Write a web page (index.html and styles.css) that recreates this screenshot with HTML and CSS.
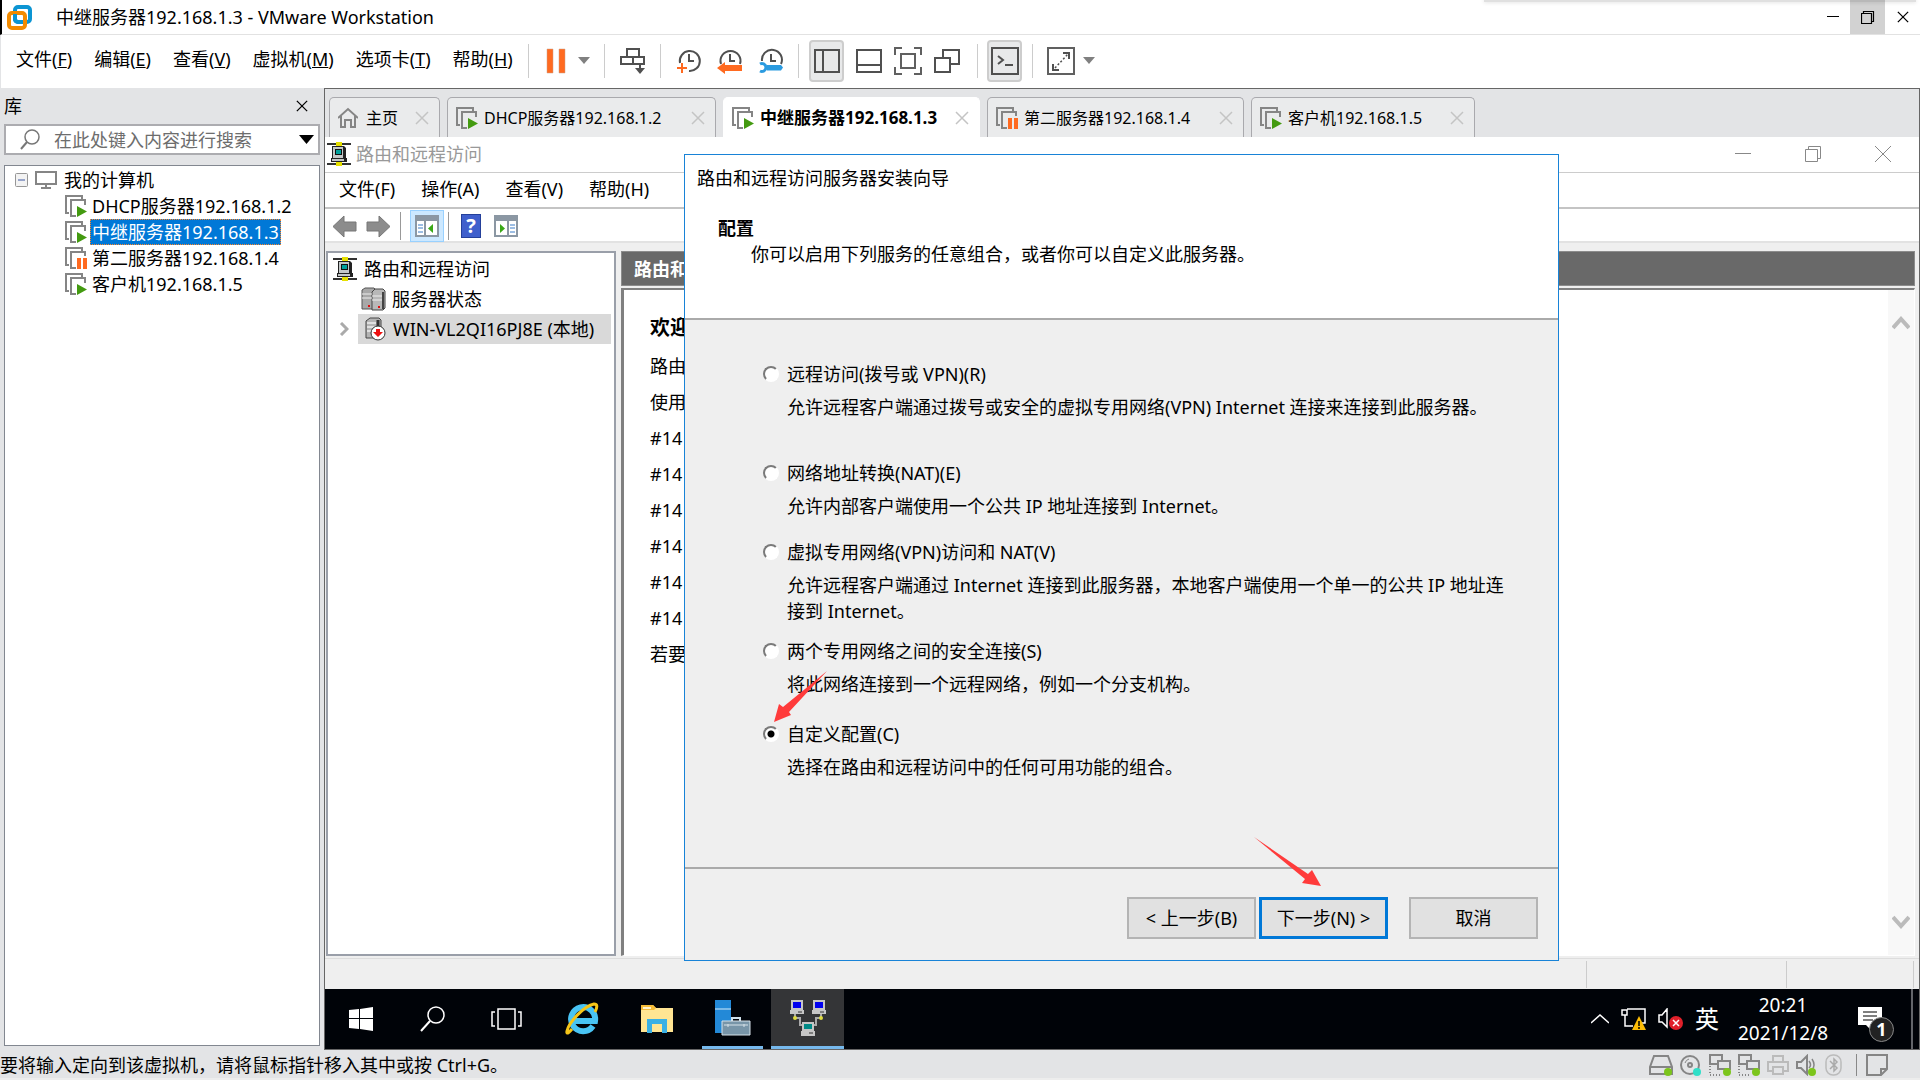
FILE: index.html
```html
<!DOCTYPE html>
<html lang="zh-CN">
<head>
    <meta charset="UTF-8">
    <meta name="viewport" content="width=device-width, initial-scale=1.0">
    <title>中继服务器192.168.1.3 - VMware Workstation</title>
    <link rel="stylesheet" href="styles.css">
</head>
<body>
    <!-- shared icons -->
    <svg class="symbols" aria-hidden="true">
        <symbol id="vm-on" viewBox="0 0 22 22">
            <path d="M17 4V1H1v17h3" fill="none" stroke="#858585" stroke-width="2"/>
            <path d="M20 10V5H6v16h5" fill="none" stroke="#858585" stroke-width="2"/>
            <path d="M12 11l10 5.5-10 5.5z" fill="#439a10"/>
        </symbol>
        <symbol id="vm-paused" viewBox="0 0 22 22">
            <path d="M17 4V1H1v17h3" fill="none" stroke="#858585" stroke-width="2"/>
            <path d="M20 9V5H6v16h5" fill="none" stroke="#858585" stroke-width="2"/>
            <path d="M12 11h4v11h-4zM18 11h4v11h-4z" fill="#ff6a20"/>
        </symbol>
        <symbol id="cross" viewBox="0 0 14 14">
            <path d="M1 1l12 12M13 1L1 13" fill="none" stroke="currentColor" stroke-width="1.5"/>
        </symbol>
        <symbol id="rras" viewBox="0 0 24 24">
            <path d="M0 2h24M0 22h24" stroke="#333" stroke-width="2"/>
            <path d="M9 0h6v4H9zM9 20h6v4H9z" fill="#e6e000"/>
            <path d="M5 4h12l2 2v10h1v4H4v-4h1z" fill="#222"/>
            <path d="M6 5h10v11H6z" fill="#c4c8c8"/>
            <path d="M8 7h7v6H8z" fill="#111"/>
            <path d="M9 8h5v4H9z" fill="#00a09a"/>
            <path d="M5 17h12v2H5z" fill="#c4c8c8"/>
        </symbol>
        <symbol id="net-state" viewBox="0 0 22 22">
            <path d="M1 1h12v9H1z" fill="none" stroke="#858585" stroke-width="2"/>
            <path d="M9 7h12v8H9z" fill="#e3e4e6" stroke="#858585" stroke-width="2"/>
            <path d="M1 12v9h11" fill="none" stroke="#858585" stroke-width="2" stroke-dasharray="1 2"/>
            <circle cx="18" cy="18" r="4" fill="#7cc51c"/>
        </symbol>
        <symbol id="clock" viewBox="0 0 26 26">
            <path d="M13 6v7h5" fill="none" stroke="#505050" stroke-width="2"/>
        </symbol>
    </svg>

    <header class="titlebar">
        <div class="screen-shadow"></div>
        <svg class="app-logo" viewBox="0 0 26 26" width="26" height="26">
            <rect x="8" y="2" width="15" height="15" rx="3" fill="none" stroke="#0c95d3" stroke-width="4"/>
            <rect x="2" y="8" width="16" height="15" rx="3" fill="none" stroke="#f38b00" stroke-width="4"/>
            <path d="M8 9v5a3 3 0 0 0 3 3h5" fill="none" stroke="#0c95d3" stroke-width="4"/>
        </svg>
        <h1 class="app-title">中继服务器192.168.1.3 - VMware Workstation</h1>
        <div class="window-buttons">
            <button aria-label="最小化"><svg width="14" height="14" viewBox="0 0 14 14"><path d="M1 6.5h12" stroke="#000"/></svg></button>
            <button class="restore" aria-label="还原"><svg width="14" height="14" viewBox="0 0 14 14"><path d="M.5 3.5h10v10H.5zM2.5 3V1.5h10v10H11" fill="none" stroke="#000" stroke-width="1.200"/></svg></button>
            <button aria-label="关闭"><svg width="12" height="12"><use href="#cross"/></svg></button>
        </div>
    </header>

    <div class="menubar">
        <nav class="menu">
            <button>文件(<u>F</u>)</button>
            <button>编辑(<u>E</u>)</button>
            <button>查看(<u>V</u>)</button>
            <button>虚拟机(<u>M</u>)</button>
            <button>选项卡(<u>T</u>)</button>
            <button>帮助(<u>H</u>)</button>
        </nav>
        <div class="tools power">
            <button aria-label="挂起"><svg width="20" height="26" viewBox="0 0 20 26"><path d="M1 1h6v24H1zM13 1h6v24h-6z" fill="#ff6a20" stroke="#c9a088" stroke-width=".5"/></svg></button>
            <button aria-label="电源选项"><svg width="12" height="7" viewBox="0 0 12 7"><path d="M0 0h12L6 7z" fill="#808080"/></svg></button>
        </div>
        <div class="tools send">
            <button aria-label="发送 Ctrl+Alt+Del"><svg width="26" height="26" viewBox="0 0 26 26"><path d="M7 1h12v8H7zM1 9h12v7H1zM13 9h11v7H13zM20 17v6" fill="none" stroke="#505050" stroke-width="2"/><path d="M15 20h10l-5 6z" fill="#505050"/></svg></button>
        </div>
        <div class="tools clocks">
            <button aria-label="拍摄快照"><svg width="26" height="26" viewBox="0 0 26 26"><path d="M4 15a10 10 0 1 1 9 8" fill="none" stroke="#505050" stroke-width="2"/><use href="#clock" width="26" height="26"/><path d="M1 20h10M6 15v10" stroke="#ff6a20" stroke-width="2"/></svg></button>
            <button aria-label="恢复快照"><svg width="26" height="26" viewBox="0 0 26 26"><path d="M4 16a10 10 0 1 1 19 0" fill="none" stroke="#505050" stroke-width="2"/><use href="#clock" width="26" height="26"/><path d="M0 20l8-6v3h17v6H8v3z" fill="#ff6a20"/></svg></button>
            <button aria-label="管理快照"><svg width="26" height="26" viewBox="0 0 26 26"><path d="M4 13a10 10 0 1 1 19 3" fill="none" stroke="#505050" stroke-width="2"/><use href="#clock" width="26" height="26"/><path d="M2 16a4 4 0 1 1 0 7" fill="none" stroke="#2b9be0" stroke-width="3"/><path d="M9 17h14l2 2.500-2 3H9z" fill="#2b9be0"/></svg></button>
        </div>
        <div class="tools views">
            <button class="pressed" aria-label="显示库"><svg width="26" height="26" viewBox="0 0 26 26"><path d="M1 2h24v22H1zM9 2v22" fill="none" stroke="#505050" stroke-width="2"/></svg></button>
            <button aria-label="缩略图栏"><svg width="26" height="26" viewBox="0 0 26 26"><path d="M1 2h24v22H1zM1 17h24" fill="none" stroke="#505050" stroke-width="2"/></svg></button>
            <button aria-label="全屏"><svg width="28" height="28" viewBox="0 0 28 28"><path d="M1 8V1h7M20 1h7v7M27 20v7h-7M8 27H1v-7M7 7h14v14H7z" fill="none" stroke="#606060" stroke-width="2"/></svg></button>
            <button aria-label="Unity"><svg width="26" height="26" viewBox="0 0 26 26"><path d="M1 10h15v14H1zM9 9V2h16v14h-8" fill="none" stroke="#505050" stroke-width="2"/></svg></button>
        </div>
        <div class="tools view-mode">
            <button class="pressed" aria-label="控制台视图"><svg width="28" height="28" viewBox="0 0 28 28"><path d="M1 1h26v26H1z" fill="none" stroke="#505050" stroke-width="2"/><path d="M7 9l5 4-5 4M14 18h8" fill="none" stroke="#505050" stroke-width="2"/></svg></button>
        </div>
        <div class="tools stretch">
            <button aria-label="自由拉伸"><svg width="28" height="28" viewBox="0 0 28 28"><path d="M1 1h26v26H1z" fill="none" stroke="#606060" stroke-width="2"/><path d="M16 6h6v6M6 17v6h6" fill="none" stroke="#505050" stroke-width="2"/><path d="M8 21L21 7" stroke="#505050" stroke-width="1.500" stroke-dasharray="2 2"/></svg></button>
            <button aria-label="拉伸选项"><svg width="12" height="7" viewBox="0 0 12 7"><path d="M0 0h12L6 7z" fill="#808080"/></svg></button>
        </div>
    </div>

    <div class="workspace">
        <aside class="library">
            <div class="library-head">
                <label for="search">库</label>
                <button aria-label="关闭库"><svg width="12" height="12"><use href="#cross"/></svg></button>
            </div>
            <div class="search-box">
                <svg width="20" height="21" viewBox="0 0 20 21"><circle cx="12" cy="8" r="7" fill="none" stroke="#777" stroke-width="1.500"/><path d="M7 13l-6 7" stroke="#777" stroke-width="2"/></svg>
                <input type="text" id="search" placeholder="在此处键入内容进行搜索">
                <button aria-label="搜索选项"><svg width="15" height="9" viewBox="0 0 15 9"><path d="M0 0h15L7.500 9z"/></svg></button>
            </div>
            <ul class="vm-tree">
                <li class="root">
                    <svg width="13" height="14" viewBox="0 0 13 14"><rect x=".5" y=".5" width="12" height="13" rx="1" fill="#f3f3f3" stroke="#969696"/><path d="M3 7h7" stroke="#3d57a0"/></svg>
                    <svg class="monitor" width="22" height="18" viewBox="0 0 22 18"><path d="M1 1h20v12H1z" fill="none" stroke="#858585" stroke-width="2"/><path d="M11 13v4M6 17h10" stroke="#858585" stroke-width="2"/></svg>
                    <span>我的计算机</span>
                </li>
                <li><svg width="22" height="22"><use href="#vm-on"/></svg><span>DHCP服务器192.168.1.2</span></li>
                <li class="selected"><svg width="22" height="22"><use href="#vm-on"/></svg><span>中继服务器192.168.1.3</span></li>
                <li><svg width="22" height="22"><use href="#vm-paused"/></svg><span>第二服务器192.168.1.4</span></li>
                <li><svg width="22" height="22"><use href="#vm-on"/></svg><span>客户机192.168.1.5</span></li>
            </ul>
        </aside>

        <main class="console">
            <div class="tabs">
                <div class="tab home">
                    <svg width="20" height="21" viewBox="0 0 20 21"><path d="M0 11l10-9 10 9M3 9v11h4v-7h6v7h4V9" fill="none" stroke="#858585" stroke-width="2"/></svg>
                    <a href="#">主页</a>
                    <button aria-label="关闭标签"><svg width="14" height="14"><use href="#cross"/></svg></button>
                </div>
                <div class="tab dhcp">
                    <svg width="22" height="22"><use href="#vm-on"/></svg>
                    <a href="#">DHCP服务器192.168.1.2</a>
                    <button aria-label="关闭标签"><svg width="14" height="14"><use href="#cross"/></svg></button>
                </div>
                <div class="tab server active">
                    <svg width="22" height="22"><use href="#vm-on"/></svg>
                    <a href="#">中继服务器192.168.1.3</a>
                    <button aria-label="关闭标签"><svg width="14" height="14"><use href="#cross"/></svg></button>
                </div>
                <div class="tab server">
                    <svg width="22" height="22"><use href="#vm-paused"/></svg>
                    <a href="#">第二服务器192.168.1.4</a>
                    <button aria-label="关闭标签"><svg width="14" height="14"><use href="#cross"/></svg></button>
                </div>
                <div class="tab client">
                    <svg width="22" height="22"><use href="#vm-on"/></svg>
                    <a href="#">客户机192.168.1.5</a>
                    <button aria-label="关闭标签"><svg width="14" height="14"><use href="#cross"/></svg></button>
                </div>
            </div>

            <div class="guest">
                <div class="mmc-title">
                    <svg width="24" height="24"><use href="#rras"/></svg>
                    <h2>路由和远程访问</h2>
                    <div class="mmc-buttons">
                        <button aria-label="最小化"><svg width="16" height="16" viewBox="0 0 16 16"><path d="M0 7.500h16" stroke="#888"/></svg></button>
                        <button aria-label="还原"><svg width="16" height="16" viewBox="0 0 16 16"><path d="M.5 3.500h12v12H.5zM3.500 3V.5h12v12H13" fill="none" stroke="#888"/></svg></button>
                        <button aria-label="关闭"><svg width="16" height="16" viewBox="0 0 16 16"><path d="M0 0l16 16M16 0L0 16" stroke="#888"/></svg></button>
                    </div>
                </div>
                <nav class="mmc-menu">
                    <button>文件(F)</button>
                    <button>操作(A)</button>
                    <button>查看(V)</button>
                    <button>帮助(H)</button>
                </nav>
                <div class="mmc-tools">
                    <button aria-label="后退"><svg width="25" height="23" viewBox="0 0 25 23"><path d="M1 11.500L12 1v6h12v9H12v6z" fill="#8c8c8c" stroke="#777"/></svg></button>
                    <button aria-label="前进"><svg width="25" height="23" viewBox="0 0 25 23"><path d="M24 11.500L13 1v6H1v9h12v6z" fill="#8c8c8c" stroke="#777"/></svg></button>
                    <span class="divider"></span>
                    <button class="on" aria-label="显示控制台树"><svg width="24" height="22" viewBox="0 0 24 22"><path d="M1 1h22v20H1z" fill="#fff" stroke="#8b97a3" stroke-width="2"/><path d="M1 1h22v5H1z" fill="#8b97a3"/><path d="M10 6v15" stroke="#8b97a3" stroke-width="2"/><path d="M3 10h5M3 13h5M3 17h5" stroke="#3a7cc8"/><path d="M18 9v9l-5-4.500z" fill="#3aa817"/></svg></button>
                    <span class="divider"></span>
                    <button class="help" aria-label="帮助">?</button>
                    <button aria-label="显示操作窗格"><svg width="24" height="22" viewBox="0 0 24 22"><path d="M1 1h22v20H1z" fill="#fff" stroke="#8b97a3" stroke-width="2"/><path d="M1 1h22v5H1z" fill="#8b97a3"/><path d="M14 6v15" stroke="#8b97a3" stroke-width="2"/><path d="M16 10h5M16 13h5M16 17h5" stroke="#3a7cc8"/><path d="M6 9v9l5-4.500z" fill="#3aa817"/></svg></button>
                </div>

                <div class="mmc-body">
                    <ul class="mmc-tree">
                        <li><svg width="24" height="24"><use href="#rras"/></svg><span>路由和远程访问</span></li>
                        <li class="child">
                            <svg width="25" height="24" viewBox="0 0 25 24"><path d="M1 3l3-2h9l2 2v19H1z" fill="#a8a8a8" stroke="#555"/><path d="M11 5l3-3h8l2 2v17l-2 2H11z" fill="#b8b8b8" stroke="#444"/><path d="M1 7h10M1 11h10M11 9h10M11 13h10" stroke="#eee"/><path d="M22 5v17" stroke="#444" stroke-width="2"/><path d="M7 18h2v2H7zM17 19h2v2h-2z" fill="#e01010"/></svg>
                            <span>服务器状态</span>
                        </li>
                        <li class="node">
                            <svg class="chevron" width="10" height="14" viewBox="0 0 10 14"><path d="M2 1l6 6-6 6" fill="none" stroke="#aaa" stroke-width="3"/></svg>
                            <div class="node-label">
                                <svg width="21" height="24" viewBox="0 0 21 24"><path d="M1 4l4-3h9l2 2v18H1z" fill="#b4b4b4" stroke="#444"/><path d="M2 6h9M2 10h9M2 14h5" stroke="#eee" stroke-width="1.500"/><path d="M13 3v8" stroke="#333" stroke-width="3"/><circle cx="13" cy="16" r="7" fill="#fff" stroke="#333"/><path d="M11 12h4v3h3l-5 5-5-5h3z" fill="#ee1010"/></svg>
                                <span>WIN-VL2QI16PJ8E (本地)</span>
                            </div>
                        </li>
                    </ul>
                    <section class="detail">
                        <h3>路由和远程访问</h3>
                        <div class="detail-body">
                            <div class="detail-text">
                                <h4>欢迎</h4>
                                <p>路由</p>
                                <p>使用</p>
                                <p>#14</p>
                                <p>#14</p>
                                <p>#14</p>
                                <p>#14</p>
                                <p>#14</p>
                                <p>#14</p>
                                <p>若要</p>
                            </div>
                            <div class="scrollbar">
                                <button aria-label="向上滚动"><svg width="18" height="14" viewBox="0 0 18 14"><path d="M1 12l8-9 8 9" fill="none" stroke="#bbb" stroke-width="4"/></svg></button>
                                <button aria-label="向下滚动"><svg width="18" height="14" viewBox="0 0 18 14"><path d="M1 2l8 9 8-9" fill="none" stroke="#bbb" stroke-width="4"/></svg></button>
                            </div>
                        </div>
                    </section>
                </div>
                <div class="mmc-status"><span></span><span></span></div>

                <div class="taskbar">
                    <button aria-label="开始"><svg width="24" height="24" viewBox="0 0 24 24"><path d="M0 3l10-1v9H0zM11 2l13-2v11H11zM0 12h10v10L0 21zM11 12h13v12l-13-2z" fill="#fff"/></svg></button>
                    <button aria-label="搜索"><svg width="26" height="26" viewBox="0 0 26 26"><circle cx="16" cy="9" r="8" fill="none" stroke="#fff" stroke-width="1.500"/><path d="M10 15L1 25" stroke="#fff" stroke-width="2"/></svg></button>
                    <button class="wide" aria-label="任务视图"><svg width="31" height="22" viewBox="0 0 31 22"><path d="M7 1h17v20H7zM4 4H1v14h3M27 4h3v14h-3" fill="none" stroke="#fff" stroke-width="1.500"/></svg></button>
                    <button class="wide" aria-label="Internet Explorer">
                        <svg width="36" height="36" viewBox="0 0 36 36"><path d="M29 25A12 12 0 1 1 31 20H8" fill="none" stroke="#48c4f4" stroke-width="6"/><path d="M8 28q-6 7-5 2c2-9 17-25 27-27q5 0 1 8" fill="none" stroke="#f5c518" stroke-width="3"/></svg>
                    </button>
                    <button class="wide" aria-label="文件资源管理器"><svg width="32" height="28" viewBox="0 0 32 28"><path d="M0 0h12l3 3h17v24H0z" fill="#ffe593"/><path d="M0 0h12l3 3-2 2H0z" fill="#f5bd38"/><path d="M2 2h8v2H2z" fill="#fff3cc"/><path d="M6 28V14h20v14h-5v-9H11v9z" fill="#3ab0e4"/></svg></button>
                    <button class="running" aria-label="服务器管理器"><svg width="36" height="36" viewBox="0 0 36 36"><path d="M0 0h16v33H0z" fill="#2389d7"/><path d="M0 9h16" stroke="#d5ecfb"/><path d="M17 21v-3h8v3" fill="none" stroke="#cfe0ea" stroke-width="2"/><path d="M7 21h28v14H7z" fill="#7895a8" stroke="#d6e2e9"/><path d="M9 25h24M13 24v3M29 24v3" stroke="#d6e2e9"/></svg></button>
                    <button class="current" aria-label="路由和远程访问">
                        <svg width="36" height="38" viewBox="0 0 36 38"><path d="M5 15v4h5v7h5M31 15v4h-5v7h-4" fill="none" stroke="#aaa" stroke-width="2"/><path d="M1 1h12v10h1v4H0v-4h1zM23 1h12v10h1v4H22v-4h1zM12 23h12v9h1v5H11v-5h1z" fill="#c6c6c6"/><path d="M3 3h8v6H3zM25 3h8v6h-8z" fill="#0000f0"/><path d="M14 25h8v5h-8z" fill="#008a86"/><path d="M8 13h4M30 13h4M19 34h4" stroke="#333"/><circle cx="5" cy="19" r="2" fill="#e0dc40"/><circle cx="31" cy="19" r="2" fill="#e0dc40"/></svg>
                    </button>
                    <div class="tray">
                        <svg width="18" height="10" viewBox="0 0 18 10"><path d="M0 9l9-8 9 8" fill="none" stroke="#fff" stroke-width="1.500"/></svg>
                        <svg width="25" height="22" viewBox="0 0 25 22"><path d="M6 1h18v14h-8M1 2h5v5H1zM4 7v11h8" fill="none" stroke="#fff" stroke-width="1.500"/><path d="M18 8l7 14H11z" fill="#fcbc05"/><path d="M18 13v5M18 19v2" stroke="#000" stroke-width="1.500"/></svg>
                        <svg width="25" height="22" viewBox="0 0 25 22"><path d="M1 7h3l5-6v18l-5-5H1z" fill="none" stroke="#fff" stroke-width="1.500"/><circle cx="18" cy="15" r="7" fill="#e0202a"/><path d="M15 12l6 6M21 12l-6 6" stroke="#fff" stroke-width="1.500"/></svg>
                        <span class="ime">英</span>
                        <time class="clock">20:21<br>2021/12/8</time>
                        <div class="notice">
                            <svg width="24" height="24" viewBox="0 0 24 24"><path d="M0 0h24v18H14v6l-6-6H0z" fill="#fff"/><path d="M5 5h14M5 9h14M5 13h10" stroke="#000"/></svg>
                            <span class="badge">1</span>
                        </div>
                    </div>
                </div>

                <!-- wizard window on the guest desktop -->
                <form class="wizard">
                    <div class="wizard-head">
                        <h2>路由和远程访问服务器安装向导</h2>
                        <h3>配置</h3>
                        <p>你可以启用下列服务的任意组合，或者你可以自定义此服务器。</p>
                    </div>
                    <div class="wizard-body">
                        <div class="option roomy">
                            <input type="radio" name="config" id="opt-remote">
                            <label for="opt-remote">远程访问(拨号或 VPN)(R)</label>
                            <p>允许远程客户端通过拨号或安全的虚拟专用网络(VPN) Internet 连接来连接到此服务器。</p>
                        </div>
                        <div class="option">
                            <input type="radio" name="config" id="opt-nat">
                            <label for="opt-nat">网络地址转换(NAT)(E)</label>
                            <p>允许内部客户端使用一个公共 IP 地址连接到 Internet。</p>
                        </div>
                        <div class="option tight">
                            <input type="radio" name="config" id="opt-vpn">
                            <label for="opt-vpn">虚拟专用网络(VPN)访问和 NAT(V)</label>
                            <p>允许远程客户端通过 Internet 连接到此服务器，本地客户端使用一个单一的公共 IP 地址连接到 Internet。</p>
                        </div>
                        <div class="option spaced">
                            <input type="radio" name="config" id="opt-secure">
                            <label for="opt-secure">两个专用网络之间的安全连接(S)</label>
                            <p>将此网络连接到一个远程网络，例如一个分支机构。</p>
                        </div>
                        <div class="option">
                            <input type="radio" name="config" id="opt-custom" checked>
                            <label for="opt-custom">自定义配置(C)</label>
                            <p>选择在路由和远程访问中的任何可用功能的组合。</p>
                        </div>
                        <svg class="arrow to-radio" width="54" height="51" viewBox="0 0 54 51"><path d="M53 0L15 41l2 3L0 51 5 33l4 3z" fill="#ff3b3b"/></svg>
                    </div>
                    <div class="wizard-foot">
                        <button type="button">&lt; 上一步(B)</button>
                        <button type="button" class="default">下一步(N) &gt;</button>
                        <button type="button" class="cancel">取消</button>
                        <svg class="arrow to-next" width="67" height="50" viewBox="0 0 67 50"><path d="M0 0l54 37 4-4 9 16-19-3 3-4z" fill="#ff3b3b"/></svg>
                    </div>
                </form>
            </div>
        </main>
    </div>

    <footer class="statusbar">
        <p>要将输入定向到该虚拟机，请将鼠标指针移入其中或按 Ctrl+G。</p>
        <div class="devices">
            <svg width="24" height="22" viewBox="0 0 24 22"><path d="M5 2h14l4 11v7H1v-7zM1 13h22" fill="none" stroke="#858585" stroke-width="2"/><circle cx="19" cy="18" r="4" fill="#7cc51c"/></svg>
            <svg width="22" height="22" viewBox="0 0 22 22"><circle cx="10" cy="11" r="9" fill="none" stroke="#858585" stroke-width="2"/><circle cx="10" cy="11" r="2" fill="none" stroke="#858585" stroke-width="2"/><path d="M5 9a6 6 0 0 1 4-4" fill="none" stroke="#858585"/><circle cx="17" cy="18" r="4" fill="#30dfc8"/></svg>
            <svg width="22" height="22"><use href="#net-state"/></svg>
            <svg width="22" height="22"><use href="#net-state"/></svg>
            <svg width="22" height="22" viewBox="0 0 22 22"><path d="M6 8V2h10v6M5 17H1V8h20v9h-4M6 13h10v7H6z" fill="none" stroke="#bbb" stroke-width="2"/></svg>
            <svg width="22" height="22" viewBox="0 0 22 22"><path d="M1 8h4l6-6v18l-6-6H1z" fill="none" stroke="#858585" stroke-width="2"/><path d="M13 7q3 4 0 7M16 5q4 6 0 11" fill="none" stroke="#858585" stroke-width="1.500"/><circle cx="16" cy="18" r="4" fill="#7cc51c"/></svg>
            <svg width="18" height="22" viewBox="0 0 18 22"><rect x="1" y="1" width="15" height="20" rx="7" fill="none" stroke="#bbb" stroke-width="1.500"/><path d="M5 7l7 7-3 3V5l3 3-7 7" fill="none" stroke="#aaa" stroke-width="1.500"/></svg>
        </div>
        <svg class="note" width="22" height="22" viewBox="0 0 22 22"><path d="M1 1h20v14l-6 6H1zM21 15h-6v6" fill="none" stroke="#858585" stroke-width="2"/></svg>
    </footer>
</body>
</html>
```
FILE: styles.css
```css
* {
    box-sizing: border-box;
}
body {
    margin: 0;
    height: 100vh;
    display: flex;
    flex-direction: column;
    overflow: hidden;
    font-family: "Noto Sans", "Noto Sans CJK SC", sans-serif;
    font-size: 18px;
    line-height: 26px;
    color: #000;
    background-color: #e3e4e6;
}
h1, h2, h3, h4, p, ul {
    margin: 0;
    padding: 0;
    font-size: 18px;
    font-weight: normal;
    list-style: none;
}
button, input {
    font: inherit;
    color: inherit;
    margin: 0;
    padding: 0;
    border: none;
    background: none;
    white-space: nowrap;
}
button {
    display: flex;
    align-items: center;
    justify-content: center;
}
svg {
    display: block;
    flex: none;
}
.symbols {
    position: absolute;
    width: 0;
    height: 0;
}

/* host window */
.titlebar {
    position: relative;
    height: 35px;
    flex: none;
    display: flex;
    align-items: center;
    padding-left: 5px;
    background-color: #fff;
    border-left: 2px solid #000;
    border-bottom: 1px solid #e2e2e2;
}
.screen-shadow {
    position: absolute;
    top: 0;
    right: 4px;
    width: 432px;
    height: 2px;
    background-color: rgba(0,0,0,0.12);
    box-shadow: 0 0 4px rgba(0,0,0,0.2);
}
.app-logo {
    margin-top: 2px;
}
.app-title {
    flex: 1;
    padding-left: 23px;
}
.window-buttons {
    display: flex;
    height: 34px;
}
.window-buttons button {
    width: 35px;
}
.window-buttons .restore {
    background-color: #d2d2d2;
}
.menubar {
    height: 53px;
    flex: none;
    display: flex;
    align-items: center;
    padding-bottom: 2px;
    background-color: #fff;
    border-left: 1px solid #e3e4e6;
}
.menu {
    width: 527px;
    flex: none;
    display: flex;
    gap: 22px;
    padding: 0 0 3px 15px;
}
.tools {
    height: 34px;
    display: flex;
    align-items: center;
    border-left: 1px solid #ccc;
}
.tools.power {
    gap: 12px;
    padding: 0 14px 0 17px;
}
.tools.send {
    padding: 0 14px 0 15px;
}
.tools.clocks {
    gap: 15px;
    padding: 0 14px 0 15px;
}
.tools.views {
    gap: 12px;
    padding: 0 17px 0 10px;
}
.tools.view-mode {
    padding: 0 10px 0 9px;
}
.tools.stretch {
    gap: 8px;
    padding-left: 14px;
}
.tools .pressed {
    width: 35px;
    height: 42px;
    background-color: #e8e9ea;
    border: 2px solid #cdcdcd;
    border-radius: 4px;
}
.workspace {
    flex: 1;
    min-height: 0;
    display: flex;
}

/* library pane */
.library {
    width: 324px;
    flex: none;
    display: flex;
    flex-direction: column;
    padding: 0 4px 4px;
}
.library-head {
    height: 36px;
    display: flex;
    align-items: center;
    justify-content: space-between;
    padding-right: 12px;
}
.search-box {
    height: 31px;
    flex: none;
    display: flex;
    align-items: center;
    margin-bottom: 10px;
    padding: 0 4px 0 14px;
    background-color: #fff;
    border: 2px solid #acacb0;
}
.search-box input {
    flex: 1;
    min-width: 0;
    padding-left: 14px;
    outline: none;
}
.search-box input::placeholder {
    color: #6d6d6d;
}
.vm-tree {
    flex: 1;
    padding-top: 1px;
    background-color: #fff;
    border: 1px solid #828790;
}
.vm-tree li {
    height: 26px;
    display: flex;
    align-items: center;
    gap: 3px;
    padding-left: 60px;
}
.vm-tree .root {
    gap: 7px;
    padding-left: 10px;
}
.vm-tree li span {
    padding: 0 2px;
}
.vm-tree .root span {
    padding: 0;
}
.vm-tree .selected span {
    color: #fff;
    background-color: #0078d7;
    outline: 1px dotted #ff8728;
    outline-offset: -1px;
}

/* console area */
.console {
    flex: 1;
    min-width: 0;
    display: flex;
    flex-direction: column;
    border: 1px solid #666;
}
.tabs {
    height: 48px;
    flex: none;
    display: flex;
    align-items: flex-end;
    gap: 7px;
    padding-left: 4px;
}
.tab {
    height: 40px;
    display: flex;
    align-items: center;
    gap: 6px;
    padding: 0 10px 0 8px;
    font-size: 16px;
    background-color: #eaebec;
    border: 1px solid #a9a9ad;
    border-bottom: none;
    border-radius: 5px 5px 0 0;
}
.tab.home {
    width: 111px;
    gap: 8px;
}
.tab.dhcp {
    width: 269px;
}
.tab.server {
    width: 257px;
}
.tab.client {
    width: 224px;
}
.tab.active {
    font-size: 17px;
    font-weight: bold;
    background-color: #fff;
    border-color: #fff;
}
.tab a {
    flex: 1;
    color: #000;
    text-decoration: none;
    white-space: nowrap;
}
.tab button {
    color: #c4c4c4;
}

/* guest desktop */
.guest {
    position: relative;
    flex: 1;
    min-height: 0;
    display: flex;
    flex-direction: column;
    background-color: #efefef;
}
.mmc-title {
    height: 36px;
    flex: none;
    display: flex;
    align-items: center;
    gap: 5px;
    padding: 0 0 2px 2px;
    color: #999;
    background-color: #fff;
    border-bottom: 1px solid #ccc;
}
.mmc-buttons {
    margin-left: auto;
    display: flex;
    gap: 54px;
    padding-right: 28px;
}
.mmc-menu {
    height: 36px;
    flex: none;
    display: flex;
    align-items: center;
    gap: 26px;
    padding: 0 0 2px 14px;
    background-color: #fff;
    border-bottom: 2px solid #c4c4c4;
}
.mmc-tools {
    height: 34px;
    flex: none;
    display: flex;
    align-items: center;
    gap: 9px;
    padding: 2px 0 0 7px;
    background-color: #fff;
    border-bottom: 2px solid #e2e2e2;
}
.mmc-tools .divider {
    width: 1px;
    height: 28px;
    background-color: #999;
}
.mmc-tools .on {
    width: 34px;
    height: 32px;
    margin-right: -5px;
    background-color: #cce8ff;
    border: 1px solid #99d1ff;
}
.mmc-tools .help {
    width: 20px;
    height: 24px;
    margin: 0 4px 0 3px;
    color: #fff;
    font-size: 20px;
    font-weight: bold;
    background-color: #3f5fcc;
    border: 1px solid #24409a;
}
.mmc-body {
    flex: 1;
    min-height: 0;
    display: flex;
    gap: 5px;
    padding: 8px 4px 2px 1px;
}
.mmc-tree {
    width: 290px;
    flex: none;
    padding: 1px 3px 0 5px;
    background-color: #fff;
    border: 2px solid #9a9fa9;
}
.mmc-tree li {
    height: 30px;
    display: flex;
    align-items: center;
    gap: 7px;
}
.mmc-tree .child {
    gap: 6px;
    padding-left: 28px;
}
.mmc-tree .node {
    justify-content: space-between;
    padding-left: 6px;
}
.node-label {
    width: 253px;
    height: 30px;
    display: flex;
    align-items: center;
    gap: 7px;
    padding-left: 7px;
    white-space: nowrap;
    background-color: #d9d9d9;
}
.detail {
    flex: 1;
    min-width: 0;
    display: flex;
    flex-direction: column;
}
.detail h3 {
    height: 35px;
    padding: 4px 12px;
    color: #fff;
    font-weight: bold;
    background-color: #696969;
    border: 1px solid #8c8c8c;
}
.detail-body {
    flex: 1;
    margin-top: 2px;
    display: flex;
    background-color: #fff;
    border: 1px solid #fff;
    border-top: 2px solid #808080;
    border-left: 3px solid #808080;
}
.detail-text {
    flex: 1;
    padding: 20px 26px;
    line-height: 36px;
}
.detail-text h4 {
    font-size: 20px;
    font-weight: bold;
    margin-bottom: 2px;
}
.scrollbar {
    width: 26px;
    display: flex;
    flex-direction: column;
    justify-content: space-between;
    align-items: center;
    padding: 26px 0;
    background-color: #f8f8f8;
}
.mmc-status {
    height: 31px;
    flex: none;
    display: flex;
    justify-content: flex-end;
    padding: 2px 5px 1px 0;
    border-top: 1px solid #ddd;
}
.mmc-status span {
    width: 200px;
    border-left: 1px solid #ccc;
}
.mmc-status span:last-child {
    width: 128px;
    border-right: 1px solid #ccc;
}

/* guest taskbar */
.taskbar {
    height: 60px;
    flex: none;
    display: flex;
    color: #fff;
    background-color: #000308;
}
.taskbar button {
    width: 72px;
}
.taskbar .wide {
    width: 75px;
}
.taskbar .running {
    width: 61px;
    margin: 0 8px;
    border-bottom: 3px solid #76b9ed;
}
.taskbar .current {
    width: 73px;
    background-color: #343537;
    border-bottom: 3px solid #76b9ed;
}
.tray {
    margin-left: auto;
    display: flex;
    align-items: center;
    gap: 12px;
    margin-right: 6px;
    padding-right: 28px;
    border-right: 2px solid #63656a;
}
.ime {
    font-size: 24px;
    line-height: 30px;
}
.clock {
    width: 104px;
    text-align: center;
    font-size: 19px;
    line-height: 28px;
}
.notice {
    position: relative;
    width: 36px;
    padding-left: 11px;
}
.badge {
    position: absolute;
    top: 10px;
    left: 22px;
    width: 25px;
    height: 25px;
    line-height: 22px;
    text-align: center;
    font-weight: bold;
    background-color: #222;
    border: 1px solid #888;
    border-radius: 50%;
}

/* setup wizard */
.wizard {
    position: absolute;
    top: 17px;
    left: 359px;
    width: 875px;
    background-color: #efefef;
    border: 1px solid #1883d7;
}
.wizard-head {
    height: 165px;
    padding: 10px 12px;
    background-color: #fff;
    border-bottom: 2px solid #aaa;
}
.wizard-head h3 {
    padding: 24px 0 0 21px;
    font-weight: bold;
}
.wizard-head p {
    padding-left: 54px;
}
.wizard-body {
    position: relative;
    height: 549px;
    padding: 41px 44px 0 78px;
    border-bottom: 2px solid #aaa;
}
.option {
    display: grid;
    grid-template-columns: 24px 1fr;
    row-gap: 7px;
    align-items: center;
    margin-bottom: 20px;
}
.option.roomy {
    margin-bottom: 40px;
}
.option.tight {
    margin-bottom: 14px;
}
.option.spaced {
    margin-bottom: 24px;
}
.option p {
    grid-column: 2;
}
.option input {
    appearance: none;
    width: 16px;
    height: 16px;
    background-color: #fff;
    border: 2px solid;
    border-color: #7a7a7a #fff #fff #7a7a7a;
    border-radius: 50%;
}
.option input:checked {
    background-image: radial-gradient(circle, #000 3px, transparent 4px);
}
.wizard-foot {
    position: relative;
    height: 91px;
    display: flex;
    justify-content: flex-end;
    padding: 28px 20px 0;
    gap: 3px;
}
.wizard-foot button {
    width: 129px;
    height: 42px;
    background-color: #e1e1e1;
    border: 2px solid #b4b4b4;
}
.wizard-foot .default {
    border: 3px solid #0078d7;
}
.wizard-foot .cancel {
    margin-left: 18px;
}
.arrow {
    position: absolute;
}
.arrow.to-radio {
    top: 351px;
    left: 89px;
}
.arrow.to-next {
    top: -32px;
    left: 569px;
}

/* host status bar */
.statusbar {
    height: 30px;
    flex: none;
    display: flex;
    align-items: center;
    padding: 2px 32px 0 0;
    border-bottom: 2px solid #ededed;
}
.statusbar p {
    flex: 1;
}
.devices {
    display: flex;
    gap: 7px;
    padding-right: 13px;
    border-right: 1px solid #888;
}
.note {
    margin-left: 9px;
}
```
